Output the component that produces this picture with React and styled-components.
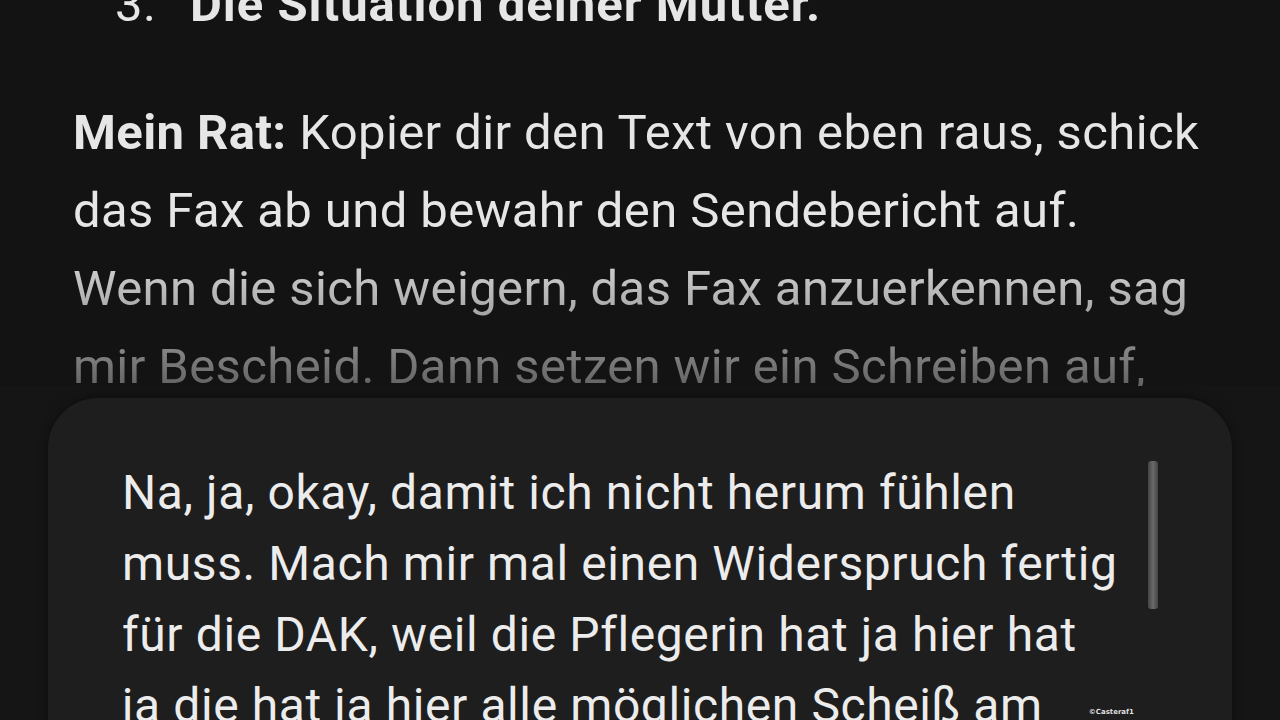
import React from "react";
import styled, { createGlobalStyle } from "styled-components";

const Global = createGlobalStyle`
  html, body { margin: 0; padding: 0; background: #131313; }
  body { font-family: Roboto, "Noto Sans", Arial, sans-serif; }
`;

const Screen = styled.div`
  position: relative;
  width: 1280px;
  height: 720px;
  overflow: hidden;
  background: #131313;
  display: grid;
  grid-template-rows: 386px 1fr;
`;

const ChatArea = styled.div`
  overflow: hidden;
  padding: 0 20px 0 73px;
  -webkit-mask-image: linear-gradient(to bottom, #000 0, #000 235px, rgba(0,0,0,0.78) 295px, rgba(0,0,0,0.38) 386px);
  mask-image: linear-gradient(to bottom, #000 0, #000 235px, rgba(0,0,0,0.78) 295px, rgba(0,0,0,0.38) 386px);
`;

const ScrollContent = styled.div`
  margin-top: -34px;
  color: #e6e6e6;
  font-size: 49px;
  letter-spacing: 0.4px;
  line-height: 78px;
`;

const ListItem = styled.div`
  display: flex;
  align-items: baseline;
  padding-left: 42px;
  margin-bottom: 50px;
`;

const ListNum = styled.span`
  width: 75px;
  font-weight: 400;
`;

const ListText = styled.span`
  font-weight: 700;
  letter-spacing: 1px;
`;

const Para = styled.p`
  margin: 0;
`;

const Line = styled.span`
  display: block;
  white-space: nowrap;
`;

const Strong = styled.strong`
  font-weight: 700;
`;

const ComposerArea = styled.div`
  background: #151515;
  padding: 12px 48px 0 48px;
`;

const Card = styled.div`
  position: relative;
  height: 100%;
  background: #1e1e1e;
  border-radius: 50px 50px 0 0;
  box-shadow: 0 -2px 10px rgba(0,0,0,0.35);
  display: flex;
  align-items: flex-start;
  padding: 59px 74px 0 74px;
  box-sizing: border-box;
`;

const InputText = styled.div`
  flex: 1;
  min-width: 0;
  color: #ececec;
  font-size: 48px;
  letter-spacing: 0.6px;
  line-height: 71px;
`;

const Scrollbar = styled.div`
  flex: none;
  width: 10px;
  height: 148px;
  margin-top: 4px;
  border-radius: 3px;
  background: linear-gradient(to right, #444 0, #6a6a6a 50%, #444 100%);
`;

const Watermark = styled.span`
  position: absolute;
  right: 146px;
  bottom: 4px;
  font-family: "DejaVu Sans", sans-serif;
  font-size: 7px;
  font-weight: 700;
  color: #ddd;
`;

export default function App() {
  return (
    <>
      <Global />
      <Screen>
        <ChatArea>
          <ScrollContent>
            <ListItem>
              <ListNum>3.</ListNum>
              <ListText>Die Situation deiner Mutter.</ListText>
            </ListItem>
            <Para>
              <Line><Strong>Mein Rat:</Strong> Kopier dir den Text von eben raus, schick</Line>
              <Line>das Fax ab und bewahr den Sendebericht auf.</Line>
              <Line>Wenn die sich weigern, das Fax anzuerkennen, sag</Line>
              <Line>mir Bescheid. Dann setzen wir ein Schreiben auf,</Line>
              <Line>das sie nicht ignorieren können.</Line>
            </Para>
          </ScrollContent>
        </ChatArea>
        <ComposerArea>
          <Card>
            <InputText>
              <Line>Na, ja, okay, damit ich nicht herum fühlen</Line>
              <Line>muss. Mach mir mal einen Widerspruch fertig</Line>
              <Line>für die DAK, weil die Pflegerin hat ja hier hat</Line>
              <Line>ja die hat ja hier alle möglichen Scheiß am</Line>
              <Line>Hals gehabt.</Line>
            </InputText>
            <Scrollbar />
          </Card>
        </ComposerArea>
        <Watermark>©Casteraf1</Watermark>
      </Screen>
    </>
  );
}
